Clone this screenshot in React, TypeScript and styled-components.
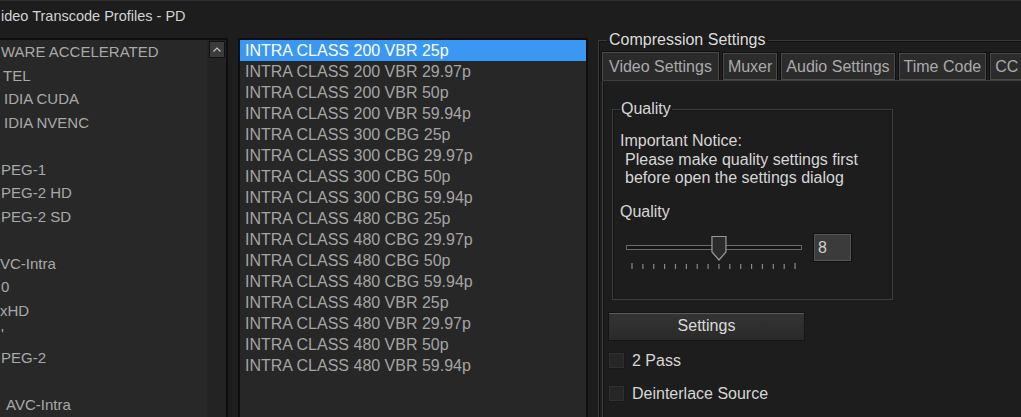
import styled, { createGlobalStyle } from "styled-components";

const GlobalStyle = createGlobalStyle`
	html, body {
		margin: 0;
		padding: 0;
		background: #1d1d1d;
	}
	body {
		font-family: "Liberation Sans", Arial, sans-serif;
		overflow: hidden;
	}
`;

const Window = styled.div`
	width: 1021px;
	height: 417px;
	overflow: hidden;
	display: flex;
	flex-direction: column;
	background: #1d1d1d;
`;

const TitleBar = styled.div`
	flex: none;
	height: 30px;
	box-sizing: border-box;
	border-top: 1px solid #2d2d2d;
	display: flex;
	align-items: center;
	padding-left: 1px;
	font-size: 14.5px;
	color: #d2d2d2;
	white-space: nowrap;
`;

const Body = styled.div`
	flex: 1;
	min-height: 0;
	display: flex;
	gap: 10px;
	padding-top: 8px;
`;

/* left: codec tree */
const CodecPanel = styled.div`
	flex: none;
	width: 228px;
	box-sizing: border-box;
	border-top: 2px solid #0e0e0e;
	border-right: 2px solid #0e0e0e;
	background: #282828;
	display: flex;
`;

const CodecList = styled.ul`
	flex: 1;
	margin: 0;
	padding: 0;
	list-style: none;
	overflow: hidden;
`;

const CodecItem = styled.li<{ $indent?: number }>`
	height: 23.5px;
	line-height: 23.5px;
	font-size: 15px;
	color: #a9a9a9;
	padding-left: ${(props) => props.$indent ?? 1}px;
	white-space: nowrap;
`;

const ScrollTrack = styled.div`
	flex: none;
	width: 19px;
	background: #232323;
	display: flex;
	flex-direction: column;
	align-items: center;
	padding-top: 1px;
`;

const ScrollButton = styled.div`
	width: 16px;
	height: 17px;
	box-sizing: border-box;
	background: #3b3b3b;
	border: 1px solid #111;
	display: flex;
	align-items: center;
	justify-content: center;
`;

/* middle: profiles */
const ProfileList = styled.ul`
	flex: none;
	width: 350px;
	box-sizing: border-box;
	margin: 0;
	padding: 0;
	list-style: none;
	border: 2px solid #0e0e0e;
	border-bottom: none;
	background: #272727;
`;

const ProfileItem = styled.li<{ $selected?: boolean }>`
	height: 21px;
	line-height: 21px;
	font-size: 16px;
	padding-left: 5px;
	white-space: nowrap;
	color: ${(props) => (props.$selected ? "#ffffff" : "#a4a4a4")};
	background: ${(props) => (props.$selected ? "#3a97f4" : "transparent")};
`;

/* right: compression settings */
const CompressionGroup = styled.fieldset`
	flex: none;
	width: 440px;
	min-width: 0;
	margin: -7px 0 0 0;
	padding: 0 0 0 3px;
	border: 1px solid #3a3a3a;
	border-bottom: none;
	box-shadow: inset 1px 1px 0 #111;
	display: flex;
	flex-direction: column;
`;

const GroupLegend = styled.legend`
	margin-left: 5px;
	padding: 0 2px;
	font-size: 16px;
	line-height: 18px;
	color: #dcdcdc;
`;

const TabStrip = styled.div`
	display: flex;
	align-items: flex-end;
	gap: 4px;
	margin-top: 3px;
`;

const Tab = styled.div<{ $active?: boolean }>`
	height: ${(props) => (props.$active ? 28 : 27)}px;
	box-sizing: border-box;
	padding: 0 ${(props) => (props.$active ? 6 : 4)}px;
	display: flex;
	align-items: center;
	font-size: 16px;
	color: #aaaaaa;
	white-space: nowrap;
	background: ${(props) => (props.$active ? "#2a2a2a" : "#2c2c2c")};
	border: 1px solid #4a4a4a;
	border-bottom: ${(props) => (props.$active ? "none" : "1px solid #4a4a4a")};
	box-shadow: 0 0 0 1px #101010;
`;

const TabPanel = styled.div`
	flex: 1;
	border: 1px solid #3e3e3e;
	border-bottom: none;
	border-right: none;
	box-shadow: inset 1px 0 0 #141414;
	padding-left: 5px;
	display: flex;
	flex-direction: column;
	align-items: flex-start;
`;

const QualityGroup = styled.fieldset`
	width: 281px;
	box-sizing: border-box;
	margin: 19px 0 0 4px;
	padding: 0 7px 29px 7px;
	border: 1px solid #3c3c3c;
	box-shadow: inset 1px 1px 0 #151515;
	min-width: 0;
`;

const QualityLegend = styled.legend`
	padding: 0 1px;
	font-size: 16px;
	line-height: 18px;
	color: #d8d8d8;
`;

const Notice = styled.div`
	margin-top: 14px;
	font-size: 16px;
	line-height: 18.5px;
	color: #d6d6d6;
`;

const NoticeLine = styled.div<{ $indent?: boolean }>`
	padding-left: ${(props) => (props.$indent ? 5 : 0)}px;
	white-space: nowrap;
`;

const FieldLabel = styled.div`
	margin-top: 15px;
	font-size: 16px;
	line-height: 18px;
	color: #d8d8d8;
`;

const SliderRow = styled.div`
	margin-top: 12px;
	display: flex;
	align-items: flex-start;
	gap: 6px;
`;

const ValueBox = styled.div`
	width: 39px;
	height: 29px;
	box-sizing: border-box;
	background: #3b3b3b;
	border: 1px solid #0f0f0f;
	box-shadow: inset 0 0 0 1px #555;
	padding-left: 4px;
	font-size: 16px;
	line-height: 27px;
	color: #cfcfcf;
`;

const SettingsButton = styled.button`
	margin-top: 12px;
	width: 197px;
	height: 29px;
	box-sizing: border-box;
	background: linear-gradient(#343434, #2a2a2a);
	border: 1px solid #141414;
	box-shadow: inset 0 1px 0 #5a5a5a;
	font-family: "Liberation Sans", Arial, sans-serif;
	font-size: 16px;
	color: #dadada;
	padding: 0;
`;

const CheckRow = styled.label<{ $first?: boolean }>`
	margin-top: ${(props) => (props.$first ? 11 : 15)}px;
	height: 18px;
	display: flex;
	align-items: center;
	gap: 7px;
	font-size: 16px;
	color: #d6d6d6;
`;

const CheckBox = styled.span`
	width: 17px;
	height: 17px;
	box-sizing: border-box;
	background: #262626;
	border: 1px solid #1a1a1a;
	box-shadow: inset 0 0 0 1px #303030;
`;

const codecs: { text: string; indent?: number }[] = [
	{ text: "WARE ACCELERATED", indent: 1 },
	{ text: "TEL", indent: 3 },
	{ text: "IDIA CUDA", indent: 4 },
	{ text: "IDIA NVENC", indent: 4 },
	{ text: "" },
	{ text: "PEG-1", indent: 1 },
	{ text: "PEG-2 HD", indent: 1 },
	{ text: "PEG-2 SD", indent: 1 },
	{ text: "" },
	{ text: "VC-Intra", indent: 0 },
	{ text: "0", indent: 1 },
	{ text: "xHD", indent: 0 },
	{ text: "'", indent: 1 },
	{ text: "PEG-2", indent: 1 },
	{ text: "" },
	{ text: "AVC-Intra", indent: 6 },
];

const profiles = [
	"INTRA CLASS 200 VBR 25p",
	"INTRA CLASS 200 VBR 29.97p",
	"INTRA CLASS 200 VBR 50p",
	"INTRA CLASS 200 VBR 59.94p",
	"INTRA CLASS 300 CBG 25p",
	"INTRA CLASS 300 CBG 29.97p",
	"INTRA CLASS 300 CBG 50p",
	"INTRA CLASS 300 CBG 59.94p",
	"INTRA CLASS 480 CBG 25p",
	"INTRA CLASS 480 CBG 29.97p",
	"INTRA CLASS 480 CBG 50p",
	"INTRA CLASS 480 CBG 59.94p",
	"INTRA CLASS 480 VBR 25p",
	"INTRA CLASS 480 VBR 29.97p",
	"INTRA CLASS 480 VBR 50p",
	"INTRA CLASS 480 VBR 59.94p",
];

const tabs = ["Video Settings", "Muxer", "Audio Settings", "Time Code", "CC"];

// 16 ticks, 0..15, value 8
function QualitySlider({ value }: { value: number }) {
	const ticks = Array.from({ length: 16 }, (_, i) => 12 + i * 10.87);
	const x = ticks[value];
	return (
		<svg width="187" height="37" viewBox="0 0 187 37">
			<rect x="6.5" y="12.5" width="175" height="4" fill="#151515" stroke="#6a6a6a" />
			{ticks.map((t, i) => (
				<line
					key={i}
					x1={t}
					x2={t}
					y1={i === 0 || i === 15 ? 30 : 31}
					y2="36"
					stroke="#8a8a8a"
					strokeWidth="1.2"
				/>
			))}
			<path
				d={`M${x - 7} 3.5 H${x + 7} V19 L${x} 27 L${x - 7} 19 Z`}
				fill="#2b2b2b"
				stroke="#9a9a9a"
				strokeWidth="1.2"
			/>
		</svg>
	);
}

function App() {
	return (
		<Window>
			<GlobalStyle />
			<TitleBar>ideo Transcode Profiles - PD</TitleBar>
			<Body>
				<CodecPanel>
					<CodecList>
						{codecs.map((c, i) => (
							<CodecItem key={i} $indent={c.indent}>
								{c.text || "\u00a0"}
							</CodecItem>
						))}
					</CodecList>
					<ScrollTrack>
						<ScrollButton>
							<svg width="8" height="5" viewBox="0 0 8 5">
								<polyline points="0.5,4.5 4,1 7.5,4.5" fill="none" stroke="#c4c4c4" strokeWidth="1.2" />
							</svg>
						</ScrollButton>
					</ScrollTrack>
				</CodecPanel>

				<ProfileList>
					{profiles.map((p, i) => (
						<ProfileItem key={p} $selected={i === 0}>
							{p}
						</ProfileItem>
					))}
				</ProfileList>

				<CompressionGroup>
					<GroupLegend>Compression Settings</GroupLegend>
					<TabStrip>
						{tabs.map((t, i) => (
							<Tab key={t} $active={i === 0}>
								{t}
							</Tab>
						))}
					</TabStrip>
					<TabPanel>
						<QualityGroup>
							<QualityLegend>Quality</QualityLegend>
							<Notice>
								<NoticeLine>Important Notice:</NoticeLine>
								<NoticeLine $indent>Please make quality settings first</NoticeLine>
								<NoticeLine $indent>before open the settings dialog</NoticeLine>
							</Notice>
							<FieldLabel>Quality</FieldLabel>
							<SliderRow>
								<QualitySlider value={8} />
								<ValueBox>8</ValueBox>
							</SliderRow>
						</QualityGroup>
						<SettingsButton>Settings</SettingsButton>
						<CheckRow $first>
							<CheckBox />2 Pass
						</CheckRow>
						<CheckRow>
							<CheckBox />Deinterlace Source
						</CheckRow>
					</TabPanel>
				</CompressionGroup>
			</Body>
		</Window>
	);
}

export default App;
